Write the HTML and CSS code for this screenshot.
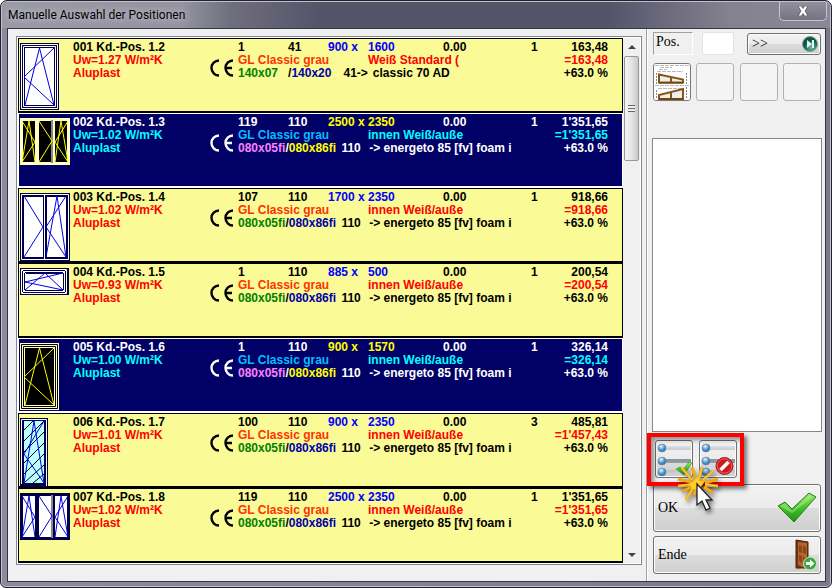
FILE: index.html
```html
<!DOCTYPE html>
<html lang="de">

<head>
    <meta charset="UTF-8">
    <meta name="viewport" content="width=device-width, initial-scale=1.0">
    <title>Manuelle Auswahl der Positionen</title>
    <link rel="stylesheet" href="styles.css">
</head>

<body>
    <svg class="defs" aria-hidden="true">
        <symbol id="ce" viewBox="0 0 24 18">
            <path d="M9 1.500A7.500 7.500 0 0 0 9 16.500M23 1.500A7.500 7.500 0 0 0 23 16.500M16 9h6" fill="none" stroke="currentColor" stroke-width="2.400" />
        </symbol>
        <symbol id="fluegel" viewBox="0 0 39 67">
            <rect class="rahmen" width="39" height="67" />
            <path class="profil" d="M1.500 1.500h36v64h-36zM3.500 3.500h32v60h-32z" />
            <rect class="glas" x="5" y="5" width="29" height="57" />
            <path class="linie" d="M5 62L19.500 5L34 62M34 5L4 34L34 62" />
        </symbol>
        <symbol id="dreiteilig" viewBox="0 0 50 47">
            <rect class="rahmen" width="50" height="47" />
            <path class="glas" d="M3 3h12v41H3zM19 3h13v41H19zM35 3h12v41H35z" />
            <path class="steg" d="M32 2v43" />
            <path class="linie" d="M2 44L9 3L15 44M2 3L15 24L2 44M19 3L32 23L19 44M35 44L41 3L48 44M48 3L35 24L48 44" />
        </symbol>
    </svg>

    <div class="window">
        <header class="titlebar">
            <h1>Manuelle Auswahl der Positionen</h1>
            <button class="close" type="button" aria-label="Schließen">
                <svg width="12" height="10" viewBox="0 0 12 10">
                    <path d="M1 0h3.500L6 2.500L7.500 0H11L8 5l3 5H7.500L6 7.500L4.500 10H1l3-5z" fill="#fff" stroke="#454552" stroke-width=".7" />
                </svg>
            </button>
        </header>

        <div class="client">
            <main>
                <div class="liste">
                    <ul>
                        <li>
                            <div class="bild"><svg width="39" height="67"><use href="#fluegel" /></svg></div>
                            <div class="info"><b>001 Kd.-Pos. 1.2</b><span>Uw=1.27 W/m²K</span><span>Aluplast</span></div>
                            <svg class="ce"><use href="#ce" /></svg>
                            <div class="daten">
                                <div class="zeile"><span>1</span><span>41</span><span class="mass">900 x</span><span class="mass">1600</span><span>0.00</span><span>1</span></div>
                                <div class="zeile"><span class="farbe">GL Classic grau</span><span class="aussen">Weiß Standard (</span></div>
                                <div class="profile"><span class="p1">140x07 &nbsp;</span> /<span class="p2">140x20</span> &nbsp; <span class="typ">41-&gt;</span>classic 70 AD</div>
                            </div>
                            <div class="preis"><span>163,48</span><span class="summe">=163,48</span><span>+63.0 %</span></div>
                        </li>
                        <li class="aktiv">
                            <div class="bild"><svg width="50" height="47"><use href="#dreiteilig" /></svg></div>
                            <div class="info"><b>002 Kd.-Pos. 1.3</b><span>Uw=1.02 W/m²K</span><span>Aluplast</span></div>
                            <svg class="ce"><use href="#ce" /></svg>
                            <div class="daten">
                                <div class="zeile"><span>119</span><span>110</span><span class="mass">2500 x</span><span class="mass">2350</span><span>0.00</span><span>1</span></div>
                                <div class="zeile"><span class="farbe">GL Classic grau</span><span class="aussen">innen Weiß/auße</span></div>
                                <div class="profile"><span class="p1">080x05fi</span>/<span class="p2">080x86fi</span> <span class="typ">110</span> -&gt; energeto 85 [fv] foam i</div>
                            </div>
                            <div class="preis"><span>1'351,65</span><span class="summe">=1'351,65</span><span>+63.0 %</span></div>
                        </li>
                        <li>
                            <div class="bild">
                                <svg width="50" height="69" viewBox="0 0 50 69">
                                    <rect class="rahmen" width="50" height="69" />
                                    <path class="profil" d="M1.500 1.500h47v65h-47z" />
                                    <path class="glas" d="M4 4h19v60H4zM27 4h19v60H27z" />
                                    <path class="profil" d="M24.500 2v64" />
                                    <path class="linie" d="M4 3L23 34L4 64M46 3L26 34L46 64M26 64L37 3L46 64" />
                                </svg>
                            </div>
                            <div class="info"><b>003 Kd.-Pos. 1.4</b><span>Uw=1.02 W/m²K</span><span>Aluplast</span></div>
                            <svg class="ce"><use href="#ce" /></svg>
                            <div class="daten">
                                <div class="zeile"><span>107</span><span>110</span><span class="mass">1700 x</span><span class="mass">2350</span><span>0.00</span><span>1</span></div>
                                <div class="zeile"><span class="farbe">GL Classic grau</span><span class="aussen">innen Weiß/auße</span></div>
                                <div class="profile"><span class="p1">080x05fi</span>/<span class="p2">080x86fi</span> <span class="typ">110</span> -&gt; energeto 85 [fv] foam i</div>
                            </div>
                            <div class="preis"><span>918,66</span><span class="summe">=918,66</span><span>+63.0 %</span></div>
                        </li>
                        <li>
                            <div class="bild">
                                <svg width="49" height="27" viewBox="0 0 49 27">
                                    <rect class="rahmen" width="49" height="27" />
                                    <path class="profil" d="M1.500 1.500h45v24h-45zM3.500 3.500h41v20h-41z" />
                                    <rect class="glas" x="5" y="6" width="38" height="16" />
                                    <path class="profil" d="M2 2l4 4M46 2l-4 4M2 25l4-4M46 25l-4-4" />
                                    <path class="linie" d="M5 22L25 5L43 22M43 5L5 14L43 22" />
                                </svg>
                            </div>
                            <div class="info"><b>004 Kd.-Pos. 1.5</b><span>Uw=0.93 W/m²K</span><span>Aluplast</span></div>
                            <svg class="ce"><use href="#ce" /></svg>
                            <div class="daten">
                                <div class="zeile"><span>1</span><span>110</span><span class="mass">885 x</span><span class="mass">500</span><span>0.00</span><span>1</span></div>
                                <div class="zeile"><span class="farbe">GL Classic grau</span><span class="aussen">innen Weiß/auße</span></div>
                                <div class="profile"><span class="p1">080x05fi</span>/<span class="p2">080x86fi</span> <span class="typ">110</span> -&gt; energeto 85 [fv] foam i</div>
                            </div>
                            <div class="preis"><span>200,54</span><span class="summe">=200,54</span><span>+63.0 %</span></div>
                        </li>
                        <li class="aktiv">
                            <div class="bild"><svg width="39" height="67"><use href="#fluegel" /></svg></div>
                            <div class="info"><b>005 Kd.-Pos. 1.6</b><span>Uw=1.00 W/m²K</span><span>Aluplast</span></div>
                            <svg class="ce"><use href="#ce" /></svg>
                            <div class="daten">
                                <div class="zeile"><span>1</span><span>110</span><span class="mass">900 x</span><span class="mass">1570</span><span>0.00</span><span>1</span></div>
                                <div class="zeile"><span class="farbe">GL Classic grau</span><span class="aussen">innen Weiß/auße</span></div>
                                <div class="profile"><span class="p1">080x05fi</span>/<span class="p2">080x86fi</span> <span class="typ">110</span> -&gt; energeto 85 [fv] foam i</div>
                            </div>
                            <div class="preis"><span>326,14</span><span class="summe">=326,14</span><span>+63.0 %</span></div>
                        </li>
                        <li>
                            <div class="bild">
                                <svg width="28" height="69" viewBox="0 0 28 69">
                                    <rect class="rahmen" width="28" height="69" />
                                    <path class="profil" d="M1.500 66V1.500h25V68" />
                                    <rect x="4" y="3" width="20" height="62" fill="#bff" />
                                    <path d="M4 12l9-9M4 23L24 3M4 34l20-20M4 45l20-20M4 56l20-20M4 65l20-18M13 65l11-9" stroke="#000" fill="none" />
                                    <path class="linie" d="M4 65L14 3L24 65M24 3L4 36L24 65" />
                                </svg>
                            </div>
                            <div class="info"><b>006 Kd.-Pos. 1.7</b><span>Uw=1.01 W/m²K</span><span>Aluplast</span></div>
                            <svg class="ce"><use href="#ce" /></svg>
                            <div class="daten">
                                <div class="zeile"><span>100</span><span>110</span><span class="mass">900 x</span><span class="mass">2350</span><span>0.00</span><span>3</span></div>
                                <div class="zeile"><span class="farbe">GL Classic grau</span><span class="aussen">innen Weiß/auße</span></div>
                                <div class="profile"><span class="p1">080x05fi</span>/<span class="p2">080x86fi</span> <span class="typ">110</span> -&gt; energeto 85 [fv] foam i</div>
                            </div>
                            <div class="preis"><span>485,81</span><span class="summe">=1'457,43</span><span>+63.0 %</span></div>
                        </li>
                        <li>
                            <div class="bild"><svg width="50" height="47"><use href="#dreiteilig" /></svg></div>
                            <div class="info"><b>007 Kd.-Pos. 1.8</b><span>Uw=1.02 W/m²K</span><span>Aluplast</span></div>
                            <svg class="ce"><use href="#ce" /></svg>
                            <div class="daten">
                                <div class="zeile"><span>119</span><span>110</span><span class="mass">2500 x</span><span class="mass">2350</span><span>0.00</span><span>1</span></div>
                                <div class="zeile"><span class="farbe">GL Classic grau</span><span class="aussen">innen Weiß/auße</span></div>
                                <div class="profile"><span class="p1">080x05fi</span>/<span class="p2">080x86fi</span> <span class="typ">110</span> -&gt; energeto 85 [fv] foam i</div>
                            </div>
                            <div class="preis"><span>1'351,65</span><span class="summe">=1'351,65</span><span>+63.0 %</span></div>
                        </li>
                    </ul>
                    <div class="scrollbar">
                        <svg width="8" height="4"><path d="M4 0l4 4H0z" fill="#444" /></svg>
                        <div class="griff"></div>
                        <svg width="8" height="4"><path d="M0 0h8L4 4z" fill="#444" /></svg>
                    </div>
                </div>
            </main>

            <aside>
                <div class="suche">
                    <label for="pos">Pos.</label>
                    <input type="text" id="pos">
                    <button type="button" class="weiter">&gt;&gt;
                        <svg width="16" height="16" viewBox="0 0 16 16">
                            <defs>
                                <radialGradient id="gruen" cx=".6" cy=".75">
                                    <stop offset="0" stop-color="#5cc4a4" />
                                    <stop offset="1" stop-color="#0d5548" />
                                </radialGradient>
                            </defs>
                            <circle cx="8" cy="8" r="7.500" fill="url(#gruen)" stroke="#889c98" />
                            <path d="M5 4l5 4-5 4zM10 4h2v8h-2z" fill="#e8f4f0" />
                        </svg>
                    </button>
                </div>

                <div class="ansichten">
                    <button type="button" aria-label="Ansicht 1">
                        <svg width="36" height="36" viewBox="0 0 36 36">
                            <rect width="36" height="36" fill="#fff" />
                            <path d="M1 1.500h34M6 3.500h12M5 5.500h8M3 7.500h26M1 21.500h34M4 24.500h26" stroke="#bbb" stroke-dasharray="4 1" />
                            <path d="M5 10.500v8h24v-3zM17 13v5.500M5 35v-4l24-6v10zM17 28v7" fill="#eee" stroke="#8a5414" stroke-width="2" />
                            <path d="M5 19h24M5 35h24" stroke="#5e3608" />
                            <path d="M2.500 9v11M32.500 9v11M2.500 26v9M32.500 23v12" stroke="#888" stroke-dasharray="2 1" />
                        </svg>
                    </button>
                    <button type="button" aria-label="Ansicht 2" disabled></button>
                    <button type="button" aria-label="Ansicht 3" disabled></button>
                    <button type="button" aria-label="Ansicht 4" disabled></button>
                </div>

                <select class="auswahl" size="10" aria-label="Auswahl"></select>

                <div class="markieren">
                    <button type="button" aria-label="Alle auswählen">
                        <svg width="36" height="36" viewBox="0 0 36 36">
                            <defs>
                                <linearGradient id="balken" x2="0" y2="1">
                                    <stop offset="0" stop-color="#dfe1e3" />
                                    <stop offset=".5" stop-color="#8b9298" />
                                    <stop offset="1" stop-color="#d0d3d5" />
                                </linearGradient>
                                <radialGradient id="kugel" cx=".4" cy=".3">
                                    <stop offset="0" stop-color="#e8f8ff" />
                                    <stop offset="1" stop-color="#3d83bd" />
                                </radialGradient>
                                <linearGradient id="haken" x2="0" y2="1">
                                    <stop offset="0" stop-color="#9be86c" />
                                    <stop offset=".5" stop-color="#45c32c" />
                                    <stop offset="1" stop-color="#1f8f16" />
                                </linearGradient>
                            </defs>
                            <g id="zeilen">
                                <path d="M9 5h26v4H9zM9 18h26v4H9zM9 29h26v4H9z" fill="url(#balken)" />
                                <g fill="url(#kugel)" stroke="#4b7ca5" stroke-width=".5">
                                    <circle cx="6" cy="7" r="4" />
                                    <circle cx="6" cy="20" r="4" />
                                    <circle cx="6" cy="31" r="4" />
                                </g>
                            </g>
                            <path d="M20 28l4-2 3 3 6-8 3 1-8 12z" fill="url(#haken)" stroke="#35902a" stroke-width=".6" />
                        </svg>
                    </button>
                    <button type="button" aria-label="Auswahl aufheben">
                        <svg width="36" height="36" viewBox="0 0 36 36">
                            <use href="#zeilen" />
                            <circle cx="24.500" cy="25" r="8.500" fill="#d4161c" stroke="#8d2a2e" />
                            <circle cx="24.500" cy="25" r="7.200" fill="none" stroke="#f07474" stroke-width=".8" />
                            <path d="M20.500 29l8-8" stroke="#fff" stroke-width="3.500" />
                        </svg>
                    </button>
                    <div class="hervorhebung"></div>
                    <svg class="zeiger" width="44" height="48" viewBox="0 0 44 48">
                        <path d="M15 14L5 2M18 12L15 1M22 12L25 1M26 14L36 5M28 17L41 13M28 19L41 20M27 21L36 27M14 16L1 13M13 19L1 20M14 21L5 26M16 22L9 34M19 22L17 29" fill="none" stroke="#eda913" stroke-width="3" />
                        <path d="M21 10l2 5 5-1-3 5-5 5-5-1-3-5 4-3z" fill="#ffce2e" stroke="#eda913" />
                        <path d="M15 14L5 2M22 12L25 1M26 14L36 5M28 18L41 20M14 18L1 20M16 22L9 34" fill="none" stroke="#ffd84a" />
                        <path d="M20 18v21l5-4 4 9 4-2-4-8h6z" fill="#fff" stroke="#222" stroke-width="1.300" />
                    </svg>
                </div>

                <button type="button" class="ok">OK
                    <svg width="40" height="32" viewBox="0 0 40 32">
                        <path d="M1 14l7-4 7 7L32 1l7 4-22 25z" fill="url(#haken)" stroke="#277d1c" />
                        <path d="M3 14l5-3 7 8L32 3l4 2-21 16z" fill="#b9f596" opacity=".45" />
                    </svg>
                </button>
                <button type="button" class="ende">Ende
                    <svg width="24" height="32" viewBox="0 0 24 32">
                        <path d="M1 30l6-3v4zM14 29l8-2v3z" fill="#bbb" />
                        <path d="M3 1l12 2v26H3z" fill="#6d3514" stroke="#4b2410" />
                        <path d="M5 3l9 1v26l-9-4z" fill="#b7652a" />
                        <path d="M6 6l3 1v7l-3-1zM10 7l3 1v7l-3-1zM6 16l3 1v7l-3-2zM10 18l3 1v7l-3-2z" fill="#8a4519" />
                        <circle cx="17" cy="24.500" r="6.500" fill="#3aa83c" stroke="#c9e8c9" />
                        <path d="M13 23h4v-2.500l4.500 4-4.500 4V26h-4z" fill="#fff" />
                    </svg>
                </button>
            </aside>
        </div>
    </div>
</body>

</html>
```
FILE: styles.css
```css
* {
    box-sizing: border-box;
}

body {
    margin: 0;
    background: #fff;
}

button {
    font-family: "Liberation Serif", serif;
    font-size: 14px;
    color: #000;
}

svg {
    display: block;
    flex: none;
}

.defs {
    position: absolute;
    width: 0;
    height: 0;
}

.window {
    display: flex;
    flex-direction: column;
    min-height: 100vh;
    padding: 0 5px 5px 6px;
    border: 1px solid #22222c;
    border-radius: 7px 7px 6px 6px;
    background: linear-gradient(to right, #8d8a9f, #7b7889);
    box-shadow: inset 0 0 0 1px #c2c1cd;
}

/* Titelleiste */
.titlebar {
    display: flex;
    justify-content: space-between;
    align-items: flex-start;
    height: 26px;
    margin: 1px -4px 0 -5px;
    padding: 0 3px 0 6px;
    border-radius: 6px 6px 0 0;
    background: linear-gradient(to right, #9a99a6, #94939f 180px, #6f6e7d 230px, #55536a 320px, #55536a 73%, #84828f 88%, #8a8896);
}

h1 {
    margin: 0;
    font-family: Roboto, "Segoe UI", sans-serif;
    font-size: 12px;
    font-weight: 400;
    line-height: 26px;
    color: #000;
    text-shadow: 0 0 6px #dcdce4;
}

.close {
    display: flex;
    justify-content: center;
    align-items: center;
    width: 48px;
    height: 19px;
    padding: 0;
    border: 1px solid #c6c5ce;
    border-top: 0;
    border-radius: 0 0 5px 5px;
    background: linear-gradient(#92909e, #757382);
}

.client {
    display: flex;
    flex: 1;
    border: 1px solid #35353f;
    background: #f0f0f0;
}

/* Liste */
main {
    flex: 1;
    min-width: 0;
    padding: 7px 4px 15px 8px;
    border-right: 1px solid #a0a0a0;
}

.liste {
    display: flex;
    padding: 1px;
    border: 1px solid #828790;
    background: #fff;
}

ul {
    flex: 1;
    min-width: 0;
    margin: 0;
    padding: 0;
    list-style: none;
}

li {
    --rahmen: #000048;
    --profil: #fff;
    --glas: #fff;
    --linie: #0000e6;
    display: flex;
    height: 75px;
    padding: 2px 14px 0 1px;
    border: 1px solid #000;
    border-bottom-width: 2px;
    background: #fafa96;
    color: #000;
    font-family: "Liberation Sans", Arial, sans-serif;
    font-size: 12px;
    font-weight: 700;
    line-height: 13px;
    white-space: nowrap;
}

li.aktiv {
    --rahmen: #ffffc0;
    --profil: #000;
    --glas: #000;
    --linie: #ff0;
    border-color: #fff;
    background: #000066;
    color: #fff;
}

.bild {
    width: 53px;
    padding-top: 2px;
}

.rahmen {
    fill: var(--rahmen);
}

.profil {
    fill: none;
    stroke: var(--profil);
}

.glas {
    fill: var(--glas);
}

.steg {
    stroke: #888;
    stroke-width: 2;
}

.linie {
    fill: none;
    stroke: var(--linie);
}

.info {
    display: flex;
    flex-direction: column;
    width: 137px;
    color: #f00;
}

.info b {
    color: #000;
}

.aktiv .info {
    color: #0ff;
}

.aktiv .info b {
    color: #fff;
}

.ce {
    width: 24px;
    height: 18px;
    margin: 18px 4px 0 0;
}

.daten {
    flex: 1;
}

.zeile {
    display: grid;
    grid-template-columns: 50px 40px 40px 75px 88px 1fr;
}

.mass {
    color: #00f;
}

.farbe {
    grid-column: 1 / 4;
    color: #ff3300;
}

.aussen {
    color: #f00;
}

.p1 {
    color: #008000;
}

.p2 {
    color: #0000a8;
}

.typ {
    margin: 0 5px 0 2px;
}

.aktiv .mass,
.aktiv .p2 {
    color: #ff0;
}

.aktiv .farbe {
    color: #00bfff;
}

.aktiv .aussen {
    color: #0ff;
}

.aktiv .p1 {
    color: #ff80ff;
}

.preis {
    display: flex;
    flex-direction: column;
    text-align: right;
}

.summe {
    color: #f00;
}

.aktiv .summe {
    color: #0ff;
}

.scrollbar {
    display: flex;
    flex-direction: column;
    align-items: center;
    width: 17px;
    padding: 7px 1px 6px;
    background: #f0f0f0;
}

.scrollbar svg:last-child {
    margin-top: auto;
}

.griff {
    width: 15px;
    height: 105px;
    margin-top: 7px;
    border: 1px solid #979797;
    border-radius: 2px;
    background:
        repeating-linear-gradient(#666 0 1px, #eee 1px 3px) center / 7px 7px no-repeat,
        linear-gradient(to right, #f5f5f5, #e4e4e6 50%, #c8c8cc);
}

/* Rechte Spalte */
aside {
    display: flex;
    flex-direction: column;
    width: 178px;
    padding: 3px 4px 7px 5px;
    border-left: 1px solid #fff;
    font-family: "Liberation Serif", serif;
    font-size: 14px;
}

.suche {
    display: flex;
    align-items: center;
    height: 23px;
}

.suche label {
    width: 40px;
    height: 23px;
    padding-left: 2px;
    border: 1px solid #a0a0a0;
    border-right-color: #fff;
    border-bottom-color: #fff;
    line-height: 17px;
}

.suche input {
    width: 32px;
    height: 23px;
    margin: 0 13px 0 9px;
    border: 1px solid #e3e3ea;
    border-radius: 2px;
    background: #fff;
}

.weiter,
.markieren button,
.ok,
.ende {
    border: 1px solid #707070;
    border-radius: 3px;
    background: linear-gradient(#f2f2f2, #ebebeb 50%, #dddddd 50%, #cfcfcf);
    box-shadow: inset 0 0 0 1px #fcfcfc;
}

.weiter,
.ok,
.ende {
    display: flex;
    justify-content: space-between;
    align-items: center;
}

.weiter {
    flex: 1;
    height: 22px;
    padding: 0 2px 0 4px;
}

.ansichten {
    display: flex;
    justify-content: space-between;
    margin: 8px 0 37px;
}

.ansichten button {
    width: 38px;
    height: 38px;
    padding: 0;
    border: 1px solid #777;
    border-radius: 3px;
    background: #f4f4f4;
    overflow: hidden;
}

.ansichten button:disabled {
    border-color: #adb2b5;
}

.auswahl {
    flex: 1;
    min-height: 60px;
    margin: 0 -1px;
    border: 1px solid #828790;
    border-radius: 0;
    background: #fff;
}

.markieren {
    position: relative;
    display: flex;
    gap: 6px;
    margin: 8px 0 6px;
    padding-left: 2px;
}

.markieren button {
    width: 38px;
    height: 38px;
    padding: 0;
}

.hervorhebung {
    position: absolute;
    top: -7px;
    left: -6px;
    width: 97px;
    height: 53px;
    border: 4px solid #f00;
    box-shadow: 3px 3px 4px rgba(0, 0, 0, 0.5), inset 3px 3px 4px rgba(0, 0, 0, 0.4);
}

.zeiger {
    position: absolute;
    top: 26px;
    left: 24px;
    filter: drop-shadow(2px 3px 2px rgba(0, 0, 0, 0.5));
}

.ok {
    height: 48px;
    padding: 0 3px 0 4px;
}

.ende {
    height: 38px;
    margin-top: 4px;
    padding: 0 3px 0 4px;
}
```
